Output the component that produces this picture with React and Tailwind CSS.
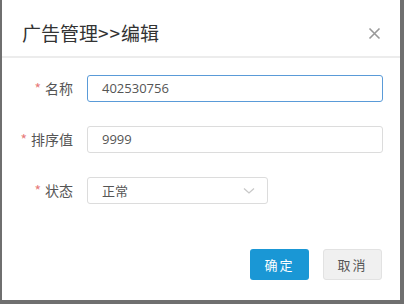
export default function App() {
  const fields = [
    { label: "名称", value: "402530756", focus: true },
    { label: "排序值", value: "9999" },
  ];

  return (
    <div className="w-[404px] h-[304px] bg-[#6f6f6f] pl-[2px] pr-[4px] pb-[4px] font-['Open_Sans','Noto_Sans_CJK_SC',sans-serif]">
      <div className="w-full h-full bg-white flex flex-col">
        <div className="h-[56px] flex items-center justify-between pl-[20px] pr-[19px] pt-[14px] pb-[4px]">
          <h1 className="text-[19px] text-[#333] font-['Noto_Sans_CJK_SC',sans-serif]">
            广告管理<span className="tracking-[1px]">&gt;&gt;</span>编辑
          </h1>
          <svg width="13" height="13" viewBox="0 0 13 13" className="text-[#999]">
            <path d="M1.5 1.5 L11.5 11.5 M11.5 1.5 L1.5 11.5" stroke="currentColor" strokeWidth="1.6" />
          </svg>
        </div>
        <div className="h-[2px] bg-[#ececec]" />

        <div className="flex flex-col gap-[24px] pt-[17px] pr-[17px]">
          {fields.map((f) => (
            <div key={f.label} className="flex items-center">
              <label className="w-[71px] text-right text-[14px] text-[#555] font-['Noto_Sans_CJK_SC',sans-serif]">
                <span className="text-[#e77b7b] mr-[4px]">*</span>
                {f.label}
              </label>
              <div
                className={
                  f.focus
                    ? "ml-[14px] flex-1 h-[27px] rounded-[3px] border border-[#5a9bd8] flex items-center pl-[14px] text-[13px] text-[#555]"
                    : "ml-[14px] flex-1 h-[27px] rounded-[3px] border border-[#dcdcdc] flex items-center pl-[14px] text-[13px] text-[#555]"
                }
              >
                {f.value}
              </div>
            </div>
          ))}
          <div className="flex items-center">
            <label className="w-[71px] text-right text-[14px] text-[#555] font-['Noto_Sans_CJK_SC',sans-serif]">
              <span className="text-[#e77b7b] mr-[4px]">*</span>
              状态
            </label>
            <div className="ml-[14px] w-[181px] h-[27px] rounded-[3px] border border-[#dcdcdc] flex items-center justify-between pl-[14px] pr-[12px] text-[13px] text-[#555] font-['Noto_Sans_CJK_SC',sans-serif]">
              <span>正常</span>
              <svg width="12" height="8" viewBox="0 0 12 8" className="text-[#c8c8c8]">
                <path d="M1 1.5 L6 6 L11 1.5" fill="none" stroke="currentColor" strokeWidth="1.3" />
              </svg>
            </div>
          </div>
        </div>

        <div className="flex justify-end gap-[14px] pr-[18px] mt-[45px]">
          <button className="w-[59px] h-[31px] rounded-[3px] bg-[#1a97d5] text-white text-[13px] tracking-[2px] font-['Noto_Sans_CJK_SC',sans-serif]">
            确定
          </button>
          <button className="w-[59px] h-[31px] rounded-[3px] bg-[#f0f0f0] border border-[#e2e2e2] text-[#555] text-[13px] tracking-[2px] font-['Noto_Sans_CJK_SC',sans-serif]">
            取消
          </button>
        </div>
      </div>
    </div>
  );
}
